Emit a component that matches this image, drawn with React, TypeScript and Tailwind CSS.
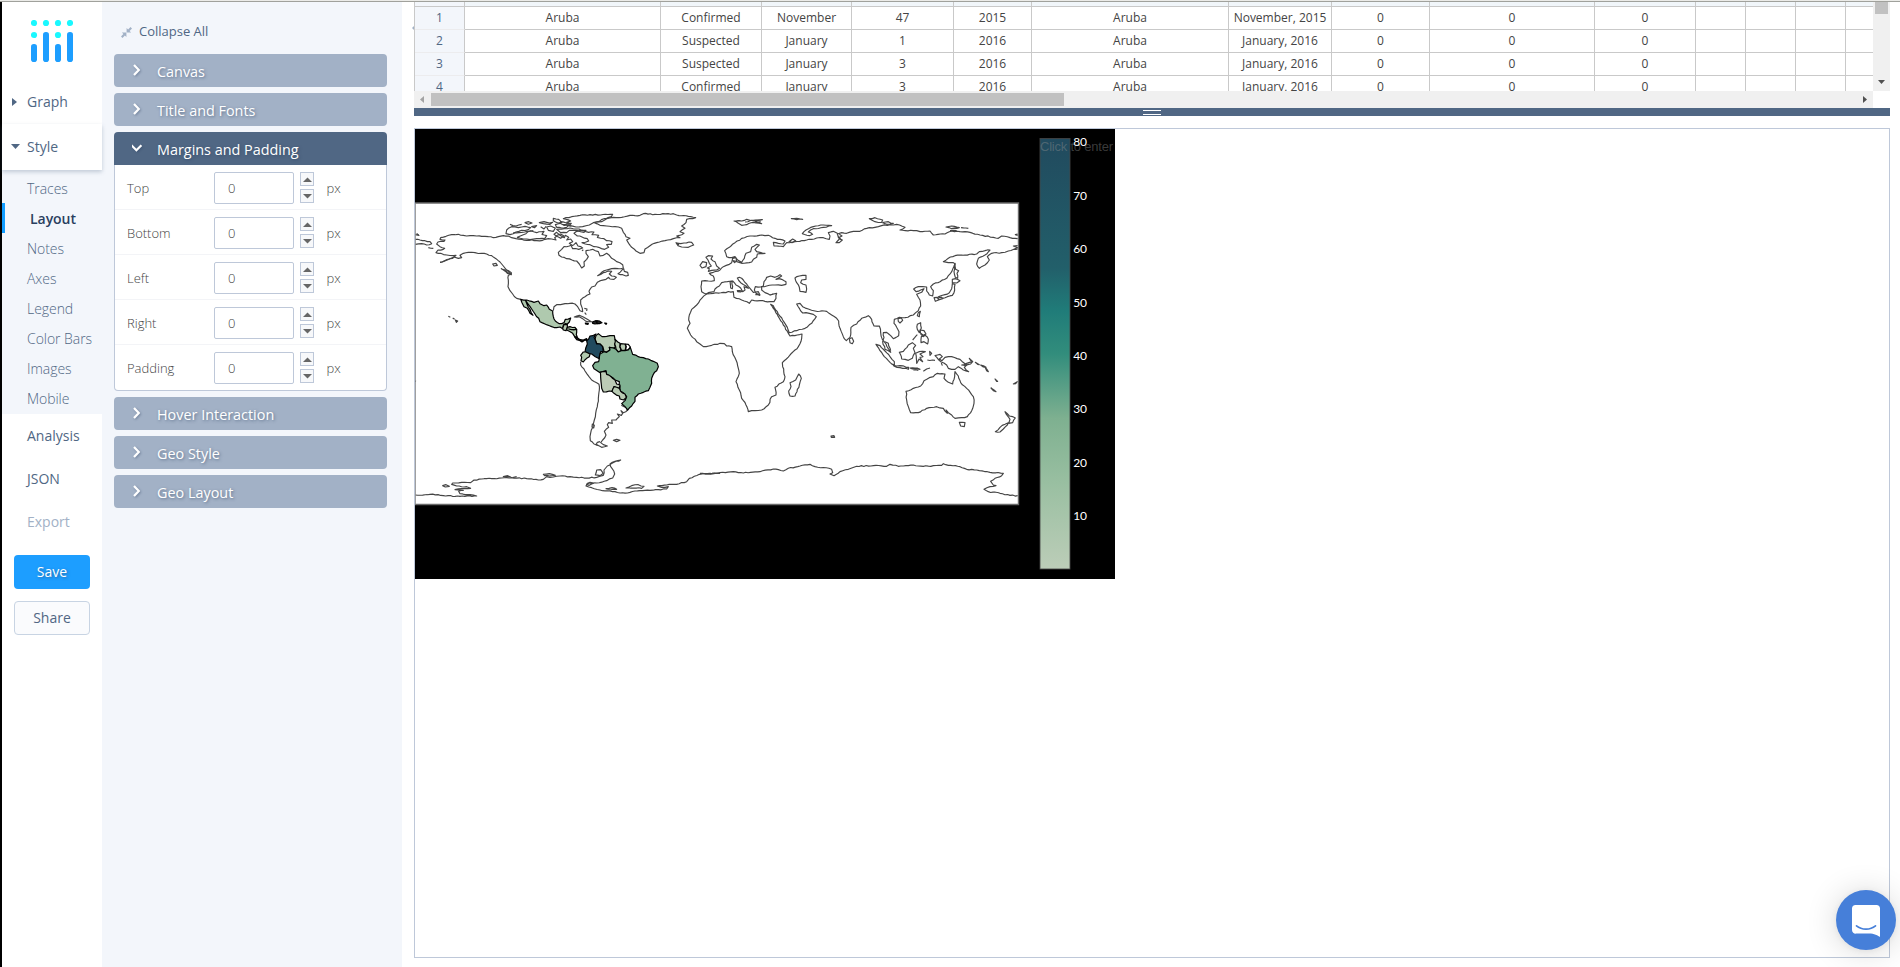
import React from 'react';

type Coast = { pts: string; fill?: string; country?: boolean; closed?: boolean };

/* Subdivides each segment and nudges the new points so that shores look irregular. */
function shore(pts: string, closed = false): string {
  const p = pts.trim().split(/\s+/).map((s) => s.split(',').map(Number));
  if (closed) p.push(p[0]);
  let d = `M${p[0][0]},${p[0][1]}`;
  for (let i = 1; i < p.length; i++) {
    const [x0, y0] = p[i - 1];
    const [x1, y1] = p[i];
    const len = Math.hypot(x1 - x0, y1 - y0);
    const n = Math.floor(len / 7);
    for (let k = 1; k < n; k++) {
      const t = k / n;
      const x = x0 + (x1 - x0) * t;
      const y = y0 + (y1 - y0) * t;
      const h = Math.sin(x * 12.9898 + y * 78.233) * 43758.5453;
      const r = (h - Math.floor(h) - 0.5) * 3.2;
      d += `L${(x - ((y1 - y0) / len) * r).toFixed(1)},${(y + ((x1 - x0) / len) * r).toFixed(1)}`;
    }
    d += `L${x1},${y1}`;
  }
  return closed ? d + 'Z' : d;
}

const west: Coast[] = [
  { pts: '90,217 104,212 118,207 132,201 138,196 130,197 110,195 92,190 78,188 84,180 100,178 104,175 90,170 80,162 84,156 102,154 105,150 90,148 92,143 108,139 125,134 145,133 160,136 180,137 200,138 215,139 235,140 250,143 265,140 280,137 295,138 305,143 318,146 335,148 350,151 365,149 380,152 398,151 405,148 415,146 425,147 438,150 434,143 440,139 432,133 440,127 448,134 455,139 463,143 466,136 476,142 470,150 482,147 488,155 478,160 485,165 478,168 462,170 455,178 445,187 447,196 455,201 470,206 486,210 500,213 508,222 515,234 523,228 522,216 530,208 535,200 528,190 528,182 540,180 548,178 565,185 570,198 580,196 590,190 598,196 605,205 620,215 638,224 640,234 625,236 605,236 590,240 575,247 563,257 580,248 595,243 605,244 598,252 605,258 619,262 612,268 600,267 596,262 588,268 575,271 562,277 555,288 545,291 540,298 537,304 540,312 525,320 512,330 512,342 517,355 518,365 510,362 503,350 495,342 480,340 465,341 452,344 440,344 432,350 430,362' },
  { pts: '90,217 97,216 112,210 128,205 132,201 145,205 155,203 150,196 160,190 175,187 195,188 215,190 230,192 245,197 258,206 270,216 280,228 288,238 298,246 303,253 295,256 295,270 294,290 300,302 308,312 320,325 332,328' },
  { pts: '248,222 258,220 262,226 252,228', closed: true },
  { pts: '274,236 288,240 304,248 304,254 292,250', closed: true },
  { pts: '280,238 296,249 302,252' },
  { pts: '16,134 27,136 20,130' },
  { pts: '16,148 30,150 45,152 60,155 65,161 50,165 35,161 16,163' },
  { pts: '55,173 70,175' },
  { pts: '290,120 305,110 325,113 345,109 362,113 355,119 335,121 318,126 300,134 288,131', closed: true },
  { pts: '322,142 340,134 362,122 380,128 402,124 396,133 410,137 404,146 380,146 360,149 340,147', closed: true },
  { pts: '300,103 318,108 335,103' },
  { pts: '310,128 335,127 352,124 370,122' },
  { pts: '345,98 356,95 366,99 355,103', closed: true },
  { pts: '365,110 380,107 374,113', closed: true },
  { pts: '388,98 402,95 418,99 428,97 420,103 400,101', closed: true },
  { pts: '410,111 422,108 436,114 430,124 415,121', closed: true },
  { pts: '392,110 402,117 408,109' },
  { pts: '436,104 450,100 462,106 478,104 470,112 455,114 440,112', closed: true },
  { pts: '430,85 446,88 456,97 444,99 430,92', closed: true },
  { pts: '460,86 485,80 510,76 540,74 572,75 608,73 604,80 582,86 568,94 550,98 538,105 518,110 498,111 478,107 484,100 470,97 482,93', closed: true },
  { pts: '450,95 476,99 460,104 484,108' },
  { pts: '440,118 462,116 480,114 500,117 528,121 522,127 502,122 478,121 470,128 452,128', closed: true },
  { pts: '500,124 520,122 536,127 552,126 546,134 566,136 562,142 582,146 590,152 606,155 604,163 590,164 596,172 584,178 566,172 552,170 540,164 526,162 516,158 536,153 532,146 516,141 502,138 492,130', closed: true },
  { pts: '438,138 452,132 462,138 452,145', closed: true },
  { pts: '484,168 498,158 504,168 518,174 506,178 488,176', closed: true },
  { pts: '516,182 520,179' },
  { pts: '553,98 575,95 590,86 610,82 635,82 660,76 690,76 700,71 735,73 790,71 800,75 835,79 857,83 830,88 828,98 815,108 825,115 810,125 822,130 800,138 810,143 790,146 765,152 740,158 720,167 705,177 702,188 690,190 678,183 665,172 656,160 650,150 660,145 648,140 640,127 635,115 615,110 590,108 570,106', closed: true },
  { pts: '798,158 806,164 800,159 812,161 822,159 845,157 851,165 835,172 815,171 804,167', closed: true },
  { pts: '624,251 636,240 641,236 643,244 653,247 655,256 648,258 638,254', closed: true },
  { pts: '115,379 121,382' },
  { pts: '128,384 134,388' },
  { pts: '136,390 143,393 139,397', closed: true },
  { pts: '493,381 508,376 520,381 532,388 544,395 528,394 518,386 508,380', closed: true },
  { pts: '523,355 531,357 530,363' },
  { pts: '524,368 529,374' },
  { pts: '15,573 18,574' },
  { pts: '512,515 512,525 525,543 537,560 545,570 567,583 568,600 565,625 562,650 557,670 553,690 549,710 544,720 540,740 541,752 552,762 565,766' },
  { pts: '547,702 553,706 551,714 546,711', closed: true },
  { pts: '653,660 640,668 633,662 638,670 634,676 622,672 628,680 618,690 605,690 607,700 596,698 592,704 596,712 590,716 583,724 588,735 578,750 572,758 580,764 592,768 575,772 558,764 562,757 570,755' },
  { pts: '610,751 620,748 630,751 620,755', closed: true },
  { pts: '634,646 648,652 652,660' },
  { pts: '16,915 60,913 100,917 150,919 200,918 180,914 150,911 146,904 160,901 135,899 155,896 182,895 170,890 140,888 125,883 128,879 155,877 182,878 192,870 215,867 245,866 275,864 305,863 350,866 385,870 400,868 410,860 430,861 450,858 480,860 500,862 530,864 560,862 580,856 582,840 592,828 612,817 632,810 615,814 600,822 606,835 614,852 608,864 590,872 560,879 532,880 528,888 545,893 570,900 600,903 630,909 660,907 690,902 720,901 745,899 770,897 775,890 755,892 742,888 770,885 800,883 830,875 838,865 868,853 900,850 930,850' },
  { pts: '98,887 108,884 118,889 106,891', closed: true },
  { pts: '556,855 560,840 572,839 580,850 570,857', closed: true },
  { pts: '400,853 418,851 436,856 418,858 404,857', closed: true },
  { pts: '280,860 293,857 302,861', closed: true },
  { pts: '308,863 320,860' },
  { pts: '648,894 665,887 685,884 702,889 695,895 670,894', closed: true },
  { pts: '588,896 606,893 620,898 600,900', closed: true },
  { pts: '530,884 540,877 550,879 538,886', closed: true },
];

const countries: Coast[] = [
  { fill: '#afc9ae', pts: '332,328 350,330 372,337 385,333 390,341 402,347 410,345 418,358 428,363 430,380 436,393 448,401 462,398 466,388 482,384 478,396 472,402 466,401 460,405 458,416 450,411 440,413 425,410 405,402 390,395 386,385 375,372 365,357 355,343 347,332 352,345 360,358 369,376 360,370 352,355 342,350 336,338' },
  { fill: '#b8cbb3', pts: '458,415 462,404 472,403 472,412 468,422 460,420' },
  { fill: '#b2caaf', pts: '472,412 480,410 495,412 500,419 499,434 502,442 494,440 488,430 478,424 470,420' },
  { fill: '#b2caaf', pts: '476,417 490,420 500,418' },
  { fill: '#222', pts: '494,441 502,443 510,449 520,450 530,446 531,452 525,450 516,456 508,451 500,449' },
  { fill: '#b8cbb3', pts: '558,437 565,431 576,440 590,439 600,437 613,437 615,448 622,455 614,462 616,472 610,474 598,472 600,480 590,486 582,485 578,470 570,462 560,460 555,448' },
  { fill: '#214a5e', pts: '558,432 548,437 540,438 536,447 530,452 532,462 527,475 525,486 535,490 545,492 556,500 568,506 570,492 572,485 580,484 578,470 570,462 560,462 556,450 552,442' },
  { fill: '#b8cbb3', pts: '615,448 622,455 630,460 630,472 634,482 625,486 618,478 614,462' },
  { fill: '#b8cbb3', pts: '632,461 645,462 648,470 645,482 634,480 630,470' },
  { fill: '#fff', pts: '646,462 655,463 661,471 655,479 646,482 649,470' },
  { fill: '#b0c9ae', pts: '520,486 528,486 540,492 538,500 530,505 520,516 513,512 515,502 512,496' },
  { fill: '#80b192', pts: '570,492 582,485 590,487 600,480 598,472 610,474 618,478 625,486 634,482 645,482 655,480 661,472 665,484 668,493 685,500 700,503 715,507 730,514 742,520 745,530 740,542 730,553 725,565 725,580 720,592 715,602 700,607 685,612 675,622 675,634 665,648 653,660 645,650 635,641 645,632 650,620 640,608 632,604 630,590 628,575 615,570 603,560 590,553 588,542 578,545 568,547 552,536 548,527 555,517 566,515 568,506' },
  { fill: '#bccbb6', pts: '571,547 588,545 590,553 603,560 615,570 620,582 630,585 628,595 612,590 606,604 598,603 580,606 575,595 573,575 572,562' },
  { fill: '#b8cbb3', pts: '606,604 612,590 628,595 632,604 645,612 649,622 641,630 630,627 628,618 612,610' },
  { fill: '#222', pts: '547,396 558,392 562,401 548,400' },
  { fill: '#222', pts: '560,392 568,393 576,398 568,401 562,401' },
  { fill: '#222', pts: '526,399 535,400 534,403 527,402' },
  { fill: '#222', pts: '584,399 590,400 588,403' },
];

const east: Coast[] = [
  { pts: '20,312 5,325 -10,345 -25,358 -32,375 -34,390 -30,400 -38,415 -28,435 -10,455 0,462 10,470 35,466 60,460 73,461 80,468 95,470 97,485 108,510 115,535 118,550 108,575 118,600 125,625 138,645 145,665 165,662 185,660 205,645 215,620 228,615 225,592 250,575 255,560 248,530 247,518 270,495 295,470 305,445 306,432 270,438 265,430 250,405 235,380 220,355 212,343 220,347 232,365 248,390 262,412 268,428 290,422 315,415 335,400 349,380 340,373 328,370 318,368 308,369 298,355 290,342 300,340 308,350 325,357 345,363 380,364 395,375 410,385 416,393 420,415 430,440 439,452 450,442 453,412 470,402 485,385 505,377 515,388 522,408 538,408 542,428 547,448 558,462 570,482 572,487 555,478 548,455 552,442 550,428 560,427 572,437 580,446 596,437 597,425 590,412 582,400 583,388 598,382 615,383 640,375 655,362 662,348 660,330 650,313 665,307 672,296 662,300 648,305 641,297 655,290 668,290 680,291 680,303 688,315 698,318 700,302 692,290 700,282 720,275 740,265 755,245 765,222 760,218 745,218 730,215 745,205 765,197 795,195 830,192 838,185 855,182 870,180 855,195 835,205 830,222 838,235 855,225 868,210 862,200 875,190 905,188 925,183 948,178 953,177' },
  { pts: '953,167 940,168 953,173 943,177' },
  { pts: '20,312 40,310 70,307 100,305 102,322 125,330 148,340 155,330 180,332 210,335 222,335 228,325 230,310 210,315 195,308 185,300 185,290 200,288 225,285 245,286 258,283 258,275 245,268 238,266 228,268 245,258 240,254 225,262 212,258 200,262 192,275 190,288 182,291 166,290 163,300 168,310 180,315 175,305 160,307 150,295 140,282 130,270 118,262 112,264 122,278 138,288 145,295 132,290 135,300 128,305 122,294 108,285 98,273 82,275 65,278 58,288 45,297 42,305 25,308 18,312 5,305 3,290 5,273 25,273 43,272 40,258 28,250 40,247 60,240 70,230 88,223 95,218 98,205 108,203 110,215 125,220 155,216 160,208 170,202 172,192 195,190 180,187 170,185 165,178 178,165 170,163 155,172 152,185 138,190 133,205 125,217 113,210 105,200 95,203 80,200 74,182 88,172 105,158 125,145 150,138 185,135 205,136 225,145 255,153 250,162 235,160 220,157 222,168 250,170 260,158 285,155 320,150 350,144 370,143 388,148 390,138 385,128 400,124 412,130 415,142 427,150 418,158 408,158 420,145 412,132 425,128 440,130 460,124 480,124 500,115 525,112 545,107 570,104 590,103 615,112 600,120 640,122 660,125 690,123 700,135 735,132 755,123 780,125 810,127 840,135 880,142 895,145 905,138 930,143 953,146' },
  { pts: '953,132 946,134 953,136' },
  { pts: '267,155 278,147 287,152 276,158', closed: true },
  { pts: '418,133 426,138 416,143 424,149' },
  { pts: '18,202 25,197 38,198 33,207 45,215 50,228 59,235 50,240 35,241 25,244 28,236 22,234 34,228 28,220 24,210', closed: true },
  { pts: '0,226 8,215 20,218 18,230 6,234', closed: true },
  { pts: '90,275 97,274 97,296 92,294', closed: true },
  { pts: '112,302 126,303 122,306 113,305', closed: true },
  { pts: '166,314 180,316' },
  { pts: '211,315 220,312' },
  { pts: '98,212 108,214 104,218', closed: true },
  { pts: '285,264 298,258 318,256 318,268 305,270 302,278 318,285 320,297 318,307 300,304 298,292 290,278', closed: true },
  { pts: '102,93 125,93 140,88 160,92 187,89 165,94 185,101 160,97 140,104 125,106 115,100', closed: true },
  { pts: '135,96 160,91 182,94' },
  { pts: '274,86 290,85 308,88 290,89', closed: true },
  { pts: '307,131 318,120 340,110 370,105 395,107 370,112 340,116 325,126 338,133 328,137', closed: true },
  { pts: '508,86 525,83 548,90 545,97 525,95', closed: true },
  { pts: '548,98 565,95 580,100 560,103', closed: true },
  { pts: '738,111 755,108 778,113 755,116', closed: true },
  { pts: '783,113 805,115' },
  { pts: '750,122 770,122' },
  { pts: '765,220 767,238 776,242 771,250 773,265 766,262 762,245', closed: true },
  { pts: '757,268 766,266 780,272 770,279 757,278', closed: true },
  { pts: '757,281 765,283 764,300 757,316 742,320 728,325 715,320 735,314 748,308 755,296', closed: true },
  { pts: '702,323 712,322 716,330 706,334', closed: true },
  { pts: '714,324 724,321 728,326 718,329', closed: true },
  { pts: '655,368 661,364 658,380 652,377', closed: true },
  { pts: '594,386 604,384 608,391 600,399 595,394', closed: true },
  { pts: '652,403 662,398 664,414 658,428 652,418', closed: true },
  { pts: '660,420 672,422 678,432 670,436 662,430', closed: true },
  { pts: '662,432 670,440 676,432' },
  { pts: '664,440 676,436 685,448 683,462 672,455 663,458', closed: true },
  { pts: '638,450 652,434' },
  { pts: '448,446 456,443 461,454 457,461 450,458', closed: true },
  { pts: '528,463 540,467 555,483 570,500 583,515 583,525 570,517 553,500 540,482', closed: true },
  { pts: '555,455 565,460 572,482' },
  { pts: '580,526 600,527 626,532 625,538 600,533 583,529', closed: true },
  { pts: '598,487 610,484 625,465 637,458 647,466 640,475 645,488 637,505 625,511 605,507', closed: true },
  { pts: '647,490 657,485 676,485 660,492 669,500 660,502 668,515 657,507 650,520 649,505', closed: true },
  { pts: '689,484 695,490 690,496', closed: true },
  { pts: '630,534 645,534 660,538 645,537', closed: true },
  { pts: '640,540 655,541' },
  { pts: '670,544 680,537 690,534' },
  { pts: '682,510 705,511' },
  { pts: '705,497 720,493 727,500 718,507 726,512 735,502 755,500 780,508 800,525 793,532 806,545 790,540 775,530 765,538 745,535 740,525 722,515', closed: true },
  { pts: '785,525 800,520 818,515 812,522 795,526', closed: true },
  { pts: '808,505 818,514 813,513', closed: true },
  { pts: '826,517 838,524 833,523', closed: true },
  { pts: '842,525 858,532 850,531', closed: true },
  { pts: '856,533 865,545 860,542', closed: true },
  { pts: '724,519 727,527' },
  { pts: '885,567 893,574 890,574', closed: true },
  { pts: '873,594 888,605 880,602', closed: true },
  { pts: '940,582 952,575 947,581', closed: true },
  { pts: '618,604 640,595 662,588 672,572 688,563 700,560 712,550 735,552 732,565 745,577 758,582 764,560 765,545 775,558 782,578 800,595 820,620 822,640 815,662 802,680 785,683 765,685 755,675 745,668 738,660 742,670 730,655 710,650 680,655 655,668 632,668 625,650 620,630', closed: true },
  { pts: '778,697 795,698 793,710 782,708', closed: true },
  { pts: '915,665 928,678 946,684 938,698 926,700 930,688', closed: true },
  { pts: '886,725 900,712 915,703 925,698 922,705 910,717 900,726', closed: true },
  { pts: '296,552 304,565 298,585 285,618 270,618 266,603 273,590 270,578 287,570', closed: true },
  { pts: '393,738 402,737 404,742 394,742', closed: true },
  { pts: '0,850 25,852 60,848 100,845 130,849 180,845 220,837 250,843 265,835 300,828 330,823 345,830 370,833 395,838 398,848 390,852 402,857 420,845 445,838 470,829 520,827 560,829 570,823 595,829 640,825 670,829 700,827 725,826 730,821 745,826 780,830 800,838 830,840 870,847 910,850 905,857 885,865 872,874 880,885 888,887 870,890 852,898 865,905 900,910 930,916 953,917' },
];

function Land({ list, country = false }: { list: Coast[]; country?: boolean }) {
  return (
    <>
      {list.map((c, i) => (
        <path
          key={i}
          d={shore(c.pts, country || c.closed)}
          fill={c.fill ?? 'none'}
          stroke={country ? '#000' : '#444'}
          strokeWidth={country ? 1.2 : 1.15}
          vectorEffect="non-scaling-stroke"
          strokeLinejoin="round"
        />
      ))}
    </>
  );
}

const ticks: [string, number][] = [['80', 146], ['70', 200], ['60', 253], ['50', 307], ['40', 360], ['30', 413], ['20', 467], ['10', 520]];

function MapPlot() {
  return (
    <svg className="block" width="700" height="450" viewBox="415 129 700 450">
      <defs>
        <clipPath id="geo"><rect x="415" y="203" width="603.5" height="301" /></clipPath>
        <linearGradient id="scale" x1="0" y1="0" x2="0" y2="1">
          <stop offset="0" stopColor="#214a5e" />
          <stop offset="0.3" stopColor="#225f6a" />
          <stop offset="0.4" stopColor="#207c79" />
          <stop offset="0.5" stopColor="#328d7c" />
          <stop offset="0.65" stopColor="#7eb090" />
          <stop offset="0.8" stopColor="#99bfa1" />
          <stop offset="1" stopColor="#bccdb8" />
        </linearGradient>
      </defs>
      <rect x="415" y="129" width="700" height="450" fill="#000" />
      <rect x="415" y="203" width="603" height="301" fill="#fff" />
      <g clipPath="url(#geo)">
        <g transform="translate(410 190) scale(0.33333)">
          <Land list={west} />
          <Land list={countries} country />
        </g>
        <g transform="translate(700 190) scale(0.33333)">
          <Land list={east} />
        </g>
      </g>
      <path d="M415,203H1018.5V504.5H415" fill="none" stroke="#6a6a6a" strokeWidth="1.4" />
      <path d="M415.3,203V504.5" stroke="#888" strokeWidth="1" />
      <rect x="1040" y="138.5" width="30" height="430.5" fill="url(#scale)" stroke="#444" strokeOpacity="0.85" />
      <text x="1040" y="151" fill="#8f8f8f" fillOpacity="0.42" className="font-['Liberation_Sans'] text-[13px]" textLength="73">Click to enter</text>
      {ticks.map(([t, y]) => (
        <text key={t} x="1073.3" y={y} fill="#fff" className="font-[Lato] text-[12px]" textLength="13.6">{t}</text>
      ))}
    </svg>
  );
}

const titleShadow = '[text-shadow:1px_1px_3px_rgba(42,63,95,0.55)]';

function Fold({ title, open = false }: { title: string; open?: boolean }) {
  return (
    <div className={`flex h-[33px] items-center pl-[18px] text-white ${open ? 'rounded-t-[4px] bg-[#506784]' : 'rounded-[4px] bg-[#a2b1c6]'}`}>
      <svg className="mb-[2px] h-[12px] w-[12px] drop-shadow-[1px_1px_1px_rgba(42,63,95,0.4)]" viewBox="0 0 12 12" fill="none" stroke="#fff" strokeWidth="2.2">
        {open ? <path d="M-0.6,3.2L4.4,8.2L9.4,3.2" /> : <path d="M2,1L6.8,6L2,11" />}
      </svg>
      <span className={`ml-[13px] pt-[3px] text-[14.4px] font-medium leading-5 ${titleShadow}`}>{title}</span>
    </div>
  );
}

function Stepper({ down = false }: { down?: boolean }) {
  return (
    <div className="flex h-[14px] w-[14px] items-center justify-center border border-[#bec8d9] bg-[#f7f8fa] pt-px">
      <svg width="9" height="5" viewBox="0 0 9 5"><path d={down ? 'M0,0H9L4.5,4.6Z' : 'M0,5H9L4.5,0.4Z'} fill="#666" /></svg>
    </div>
  );
}

function Field({ label }: { label: string }) {
  return (
    <div className="flex h-[45px] items-start border-b border-[#f3f4f7] pl-3 pt-[7px] last:border-b-0">
      <span className="w-[87px] pt-[7px] text-[13px] font-light leading-[18px] text-[#444]">{label}</span>
      <div className="flex h-8 w-20 items-center rounded-[2px] border border-[#bec8d9] bg-white pl-[13px] pt-px text-[13px] font-light text-[#444]">0</div>
      <div className="ml-[6px] flex flex-col gap-[3px]"><Stepper /><Stepper down /></div>
      <span className="ml-[12.5px] pt-[7px] text-[13px] font-light leading-[18px] text-[#444]">px</span>
    </div>
  );
}

const cols = ['w-[196px]', 'w-[101px]', 'w-[90px]', 'w-[102px]', 'w-[78px]', 'w-[197px]', 'w-[103px]', 'w-[98px]', 'w-[165px]', 'w-[101px]', 'w-[50px]', 'w-[50px]', 'w-[50px]', 'w-[27px]'];
const rows = [
  ['Aruba', 'Confirmed', 'November', '47', '2015', 'Aruba', 'November, 2015', '0', '0', '0', '', '', '', ''],
  ['Aruba', 'Suspected', 'January', '1', '2016', 'Aruba', 'January, 2016', '0', '0', '0', '', '', '', ''],
  ['Aruba', 'Suspected', 'January', '3', '2016', 'Aruba', 'January, 2016', '0', '0', '0', '', '', '', ''],
  ['Aruba', 'Confirmed', 'January', '3', '2016', 'Aruba', 'January, 2016', '0', '0', '0', '', '', '', ''],
];

function Sheet() {
  return (
    <div className="w-[1476px]">
      <div className="flex h-[89px]">
        <div className="h-full w-[1459px] overflow-hidden border-l border-[#c9c9c9] text-[12px] text-[#444]">
          <div className="flex h-[5px]">
            <div className="w-[50px] border-b border-r border-[#c9c9c9] bg-[#f3f6fb]" />
            {cols.map((w, i) => <div key={i} className={`${w} shrink-0 border-b border-r border-[#c9c9c9] bg-[#f1f6fa] last:border-r-0`} />)}
          </div>
          {rows.map((r, n) => (
            <div key={n} className="flex h-[23px]">
              <div className="flex w-[50px] shrink-0 items-center justify-center border-b border-b-[#ececee] border-r border-r-[#c9c9c9] bg-[#f3f6fb] text-[#506784]">{n + 1}</div>
              {r.map((c, i) => (
                <div key={i} className={`${cols[i]} flex shrink-0 items-center justify-center whitespace-nowrap border-b border-r border-[#c9c9c9] last:border-r-0`}>{c}</div>
              ))}
            </div>
          ))}
        </div>
        <div className="flex w-[17px] flex-col items-center justify-between bg-[#f0f0f0] pb-[7px]">
          <div className="h-3 w-[13px] bg-[#c1c1c1]" />
          <svg width="7" height="4" viewBox="0 0 7 4"><path d="M0,0H7L3.5,4Z" fill="#505050" /></svg>
        </div>
      </div>
      <div className="flex h-[17px] w-[1459px] items-center bg-[#f0f0f0] pl-[6px] pr-[6px]">
        <svg width="4" height="7" viewBox="0 0 4 7"><path d="M4,0V7L0,3.5Z" fill="#a3a3a3" /></svg>
        <div className="ml-[7px] h-[13px] w-[633px] bg-[#c1c1c1]" />
        <svg className="ml-auto" width="4" height="7" viewBox="0 0 4 7"><path d="M0,0V7L4,3.5Z" fill="#505050" /></svg>
      </div>
      <div className="flex h-2 flex-col items-center gap-[3px] bg-[#506784] pt-[2px]">
        <div className="h-px w-[18px] bg-white" />
        <div className="h-px w-[18px] bg-white" />
      </div>
    </div>
  );
}

const modes = ['Traces', 'Layout', 'Notes', 'Axes', 'Legend', 'Color Bars', 'Images', 'Mobile'];

function Sidebar() {
  return (
    <nav className="flex w-[100px] shrink-0 flex-col bg-white text-[14px] text-[#506784]">
      <svg className="ml-[29px] mt-[18px] h-[42px] w-[42px]" viewBox="0 0 42 42">
        {[3, 15, 27, 39].map((x) => <circle key={x} cx={x} cy="3" r="3.1" fill="#19f8ff" />)}
        {[3, 27].map((x) => <circle key={x} cx={x} cy="15" r="3.1" fill="#19f8ff" />)}
        {[0, 24].map((x) => <rect key={x} x={x} y="24" width="6" height="18" rx="2.8" fill="#1d9eff" />)}
        {[12, 36].map((x) => <rect key={x} x={x} y="12" width="6" height="30" rx="2.8" fill="#1d9eff" />)}
      </svg>
      <div className="mt-[17px] flex h-[45px] items-center pl-[10px]">
        <svg width="5" height="8" viewBox="0 0 5 8"><path d="M0,0V8L5,4Z" fill="#506784" /></svg>
        <span className="ml-[10px]">Graph</span>
      </div>
      <div className="z-10 flex h-[46px] items-center bg-white pl-[9px] pb-[2px] shadow-[0_2px_4px_rgba(80,103,132,0.3)]">
        <svg width="9" height="5" viewBox="0 0 9 5"><path d="M0,0H9L4.5,5Z" fill="#506784" /></svg>
        <span className="ml-[7px]">Style</span>
      </div>
      <div className="h-[244px] bg-[#f3f6fb] pt-[3px] tracking-[-0.05px]">
        {modes.map((m) => m === 'Layout' ? (
          <div key={m} className="flex h-[30px] items-center border-l-[3px] border-[#119dff] pl-[25px] font-semibold text-[#2a3f5f]">{m}</div>
        ) : (
          <div key={m} className="flex h-[30px] items-center whitespace-nowrap pl-[25px] font-light">{m}</div>
        ))}
      </div>
      <div className="flex h-[43px] items-center pl-[25px]">Analysis</div>
      <div className="flex h-[43px] items-center pl-[25px]">JSON</div>
      <div className="flex h-[43px] items-center pl-[25px] text-[#a2b1c6]">Export</div>
      <div className="mt-3 flex flex-col gap-3 px-3 text-[14px] font-medium">
        <button className={`h-[34px] rounded-[4px] bg-[#1d9eff] pb-px text-white ${titleShadow}`}>Save</button>
        <button className="h-[34px] rounded-[4px] border border-[#c8d4e3] bg-[#fafbfd] pb-px">Share</button>
      </div>
    </nav>
  );
}

export default function App() {
  return (
    <div className="relative flex h-[967px] w-[1900px] flex-col overflow-hidden bg-white font-['Open_Sans',sans-serif]">
      <div className="h-[2px] shrink-0 border-b border-[#a0a19c] bg-[#ebebe8]" />
      <div className="flex min-h-0 flex-1 border-l-2 border-black">
        <Sidebar />
        <section className="w-[300px] shrink-0 bg-[#f3f6fb] pl-3 pr-[15px]">
          <div className="flex h-[52px] items-center pt-[8px] text-[13px] text-[#506784]">
            <svg className="ml-[7px] h-[11px] w-[11px]" viewBox="0 0 11 11" fill="#a2b1c6">
              <path d="M5.6,5.4V0.9L7.1,2.4L9.5,0L11,1.5L8.6,3.9L10.1,5.4Z" />
              <path d="M5.4,5.6V10.1L3.9,8.6L1.5,11L0,9.5L2.4,7.1L0.9,5.6Z" />
            </svg>
            <span className="ml-[7px]">Collapse All</span>
          </div>
          <div className="flex flex-col gap-[6px]">
            <Fold title="Canvas" />
            <Fold title="Title and Fonts" />
            <div>
              <Fold title="Margins and Padding" open />
              <div className="h-[226px] rounded-b-[4px] border border-t-0 border-[#bec8d9] bg-white">
                {['Top', 'Bottom', 'Left', 'Right', 'Padding'].map((l) => <Field key={l} label={l} />)}
              </div>
            </div>
            <Fold title="Hover Interaction" />
            <Fold title="Geo Style" />
            <Fold title="Geo Layout" />
          </div>
        </section>
        <div className="flex w-3 shrink-0 justify-end pt-[24px]">
          <svg width="2" height="4" viewBox="0 0 2 4"><path d="M2,0V4L0,2Z" fill="#a2b1c6" /></svg>
        </div>
        <main className="w-[1476px]">
          <Sheet />
          <div className="mt-3 h-[830px] border border-[#bec8d9]">
            <MapPlot />
          </div>
        </main>
      </div>
      <div className="absolute left-[1836px] top-[890px] flex h-[60px] w-[60px] items-center justify-center rounded-full bg-[#467fd9] shadow-[0_1px_6px_rgba(0,0,0,0.06),0_2px_32px_rgba(0,0,0,0.16)]">
        <svg width="28" height="32" viewBox="0 0 28 32" className="mt-[2px]">
          <path d="M28,32S23.3,28.9 18.9,28.6H4A3.6,3.6 0 0 1 0,25V3.5A3.6,3.6 0 0 1 3.6,0H24.4A3.6,3.6 0 0 1 28,3.5Z" fill="#fff" />
          <path d="M4.5,20.8C9.8,25.2 18.2,25.2 23.5,20.8" fill="none" stroke="#467fd9" strokeWidth="1.7" strokeLinecap="round" />
        </svg>
      </div>
    </div>
  );
}
